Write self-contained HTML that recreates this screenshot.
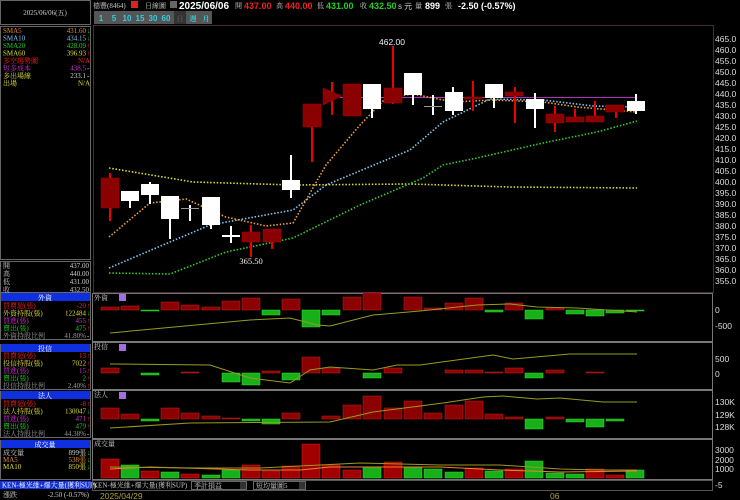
<!DOCTYPE html>
<html><head><meta charset="utf-8"><style>
html,body{margin:0;padding:0;background:#000;}
svg{display:block;font-family:"Liberation Sans","Noto Sans CJK TC",sans-serif;}
.s{font-family:"Liberation Serif","Noto Serif CJK SC",serif;font-size:7px;}
.a{font-size:8.5px;fill:#ddd;font-family:"Liberation Sans",sans-serif;}
</style></head><body>
<svg width="740" height="500" viewBox="0 0 740 500" xmlns="http://www.w3.org/2000/svg">
<rect width="740" height="500" fill="#000"/>
<rect x="0.5" y="0.5" width="90" height="24" fill="none" stroke="#666"/>
<text x="45" y="15" class="s" fill="#ccc" text-anchor="middle">2025/06/06(五)</text>
<rect x="0.5" y="26.5" width="90" height="233" fill="none" stroke="#666"/>
<g class="s">
<text x="3" y="33" fill="#e08a30">SMA5</text><text x="86" y="33" fill="#e08a30" text-anchor="end">431.60</text><text x="87" y="33" fill="#2c2">↓</text>
<text x="3" y="40.5" fill="#7cc8f0">SMA10</text><text x="86" y="40.5" fill="#7cc8f0" text-anchor="end">434.15</text><text x="87" y="40.5" fill="#2c2">↓</text>
<text x="3" y="48" fill="#2c2">SMA20</text><text x="86" y="48" fill="#2c2" text-anchor="end">428.09</text><text x="87" y="48" fill="#e22">↑</text>
<text x="3" y="55.5" fill="#dd3">SMA60</text><text x="86" y="55.5" fill="#dd3" text-anchor="end">396.93</text><text x="87" y="55.5" fill="#e22">↑</text>
<text x="3" y="63" fill="#e22">多空趨勢圖</text><text x="90" y="63" fill="#e22" text-anchor="end">N/A</text>
<text x="3" y="70.5" fill="#c3c">短多成本</text><text x="86" y="70.5" fill="#c3c" text-anchor="end">438.5</text><text x="87" y="70.5" fill="#ccc">-</text>
<text x="3" y="78" fill="#dd3">多出場線</text><text x="86" y="78" fill="#ccc" text-anchor="end">233.1</text><text x="87" y="78" fill="#ccc">-</text>
<text x="3" y="85.5" fill="#dd3">出場</text><text x="90" y="85.5" fill="#dd3" text-anchor="end">N/A</text>
</g>
<rect x="0.5" y="261.5" width="90" height="31" fill="none" stroke="#666"/>
<g class="s" fill="#ccc">
<text x="3" y="268">開</text><text x="89" y="268" text-anchor="end">437.00</text>
<text x="3" y="276">高</text><text x="89" y="276" text-anchor="end">440.00</text>
<text x="3" y="284">低</text><text x="89" y="284" text-anchor="end">431.00</text>
<text x="3" y="292">收</text><text x="89" y="292" text-anchor="end">432.50</text>
</g>
<rect x="0.5" y="293.5" width="90" height="46" fill="none" stroke="#666"/>
<rect x="1" y="293" width="89" height="8" fill="#1030e0"/>
<text x="45" y="300" class="s" fill="#fff" text-anchor="middle">外資</text>
<g class="s">
<text x="3" y="308" fill="#e22">買賣超(張)</text><text x="86" y="308" fill="#e22" text-anchor="end">-20</text><text x="87" y="308" fill="#e22">↑</text>
<text x="3" y="315.5" fill="#dd3">外資持股(張)</text><text x="86" y="315.5" fill="#dd3" text-anchor="end">122484</text><text x="87" y="315.5" fill="#2c2">↓</text>
<text x="3" y="323" fill="#c3c">買進(張)</text><text x="86" y="323" fill="#c3c" text-anchor="end">455</text><text x="87" y="323" fill="#e22">↑</text>
<text x="3" y="330.5" fill="#2c2">賣出(張)</text><text x="86" y="330.5" fill="#2c2" text-anchor="end">475</text><text x="87" y="330.5" fill="#e22">↑</text>
<text x="3" y="338" fill="#999">外資持股比例</text><text x="86" y="338" fill="#999" text-anchor="end">41.80%</text><text x="87" y="338" fill="#ccc">-</text>
</g>
<rect x="0.5" y="344.5" width="90" height="45" fill="none" stroke="#666"/>
<rect x="1" y="344" width="89" height="8" fill="#1030e0"/>
<text x="45" y="351" class="s" fill="#fff" text-anchor="middle">投信</text>
<g class="s">
<text x="3" y="358" fill="#e22">買賣超(張)</text><text x="86" y="358" fill="#e22" text-anchor="end">13</text><text x="87" y="358" fill="#e22">↑</text>
<text x="3" y="365.5" fill="#dd3">投信持股(張)</text><text x="86" y="365.5" fill="#dd3" text-anchor="end">7022</text><text x="87" y="365.5" fill="#e22">↑</text>
<text x="3" y="373" fill="#c3c">買進(張)</text><text x="86" y="373" fill="#c3c" text-anchor="end">15</text><text x="87" y="373" fill="#e22">↑</text>
<text x="3" y="380.5" fill="#2c2">賣出(張)</text><text x="86" y="380.5" fill="#2c2" text-anchor="end">2</text><text x="87" y="380.5" fill="#e22">↑</text>
<text x="3" y="388" fill="#999">投信持股比例</text><text x="86" y="388" fill="#999" text-anchor="end">2.40%</text><text x="87" y="388" fill="#e22">↑</text>
</g>
<rect x="0.5" y="391.5" width="90" height="46" fill="none" stroke="#666"/>
<rect x="1" y="391" width="89" height="8" fill="#1030e0"/>
<text x="45" y="398" class="s" fill="#fff" text-anchor="middle">法人</text>
<g class="s">
<text x="3" y="406" fill="#e22">買賣超(張)</text><text x="86" y="406" fill="#e22" text-anchor="end">-8</text><text x="87" y="406" fill="#e22">↑</text>
<text x="3" y="413.5" fill="#dd3">法人持股(張)</text><text x="86" y="413.5" fill="#dd3" text-anchor="end">130047</text><text x="87" y="413.5" fill="#2c2">↓</text>
<text x="3" y="421" fill="#c3c">買進(張)</text><text x="86" y="421" fill="#c3c" text-anchor="end">471</text><text x="87" y="421" fill="#e22">↑</text>
<text x="3" y="428.5" fill="#2c2">賣出(張)</text><text x="86" y="428.5" fill="#2c2" text-anchor="end">479</text><text x="87" y="428.5" fill="#e22">↑</text>
<text x="3" y="436" fill="#999">法人持股比例</text><text x="86" y="436" fill="#999" text-anchor="end">44.38%</text><text x="87" y="436" fill="#ccc">-</text>
</g>
<rect x="0.5" y="440.5" width="90" height="39" fill="none" stroke="#666"/>
<rect x="1" y="440" width="89" height="8" fill="#1030e0"/>
<text x="45" y="447" class="s" fill="#fff" text-anchor="middle">成交量</text>
<g class="s">
<text x="3" y="455" fill="#ccc">成交量</text><text x="86" y="455" fill="#ccc" text-anchor="end">899張</text><text x="87" y="455" fill="#2c2">↓</text>
<text x="3" y="462" fill="#e08a30">MA5</text><text x="86" y="462" fill="#e08a30" text-anchor="end">538張</text><text x="87" y="462" fill="#2c2">↓</text>
<text x="3" y="469" fill="#dd3">MA10</text><text x="86" y="469" fill="#dd3" text-anchor="end">850張</text><text x="87" y="469" fill="#2c2">↓</text>
</g>
<rect x="0" y="481" width="91" height="8" fill="#1030e0"/>
<text x="2" y="487.5" class="s" fill="#fff" font-size="6.5">KEN-極光維+爆大量(獲利SUP)</text>
<text x="3" y="497" class="s" fill="#ccc">漲跌</text><text x="89" y="497" class="s" fill="#ccc" text-anchor="end">-2.50 (-0.57%)</text>

<g font-size="8.5">
<text x="93" y="8" class="s" fill="#ccc">德豐(8464)</text>
<rect x="131" y="1" width="7" height="7" fill="#d22"/>
<text x="145" y="8" class="s" fill="#ccc">日線圖</text>
<rect x="170" y="1" width="7" height="7" fill="#666"/>
<text x="179" y="9" fill="#fff" font-weight="bold" font-size="10">2025/06/06</text>
<text x="235" y="8" class="s" fill="#ccc">開</text><text x="244" y="9" fill="#e22" font-weight="bold" font-size="9">437.00</text>
<text x="276" y="8" class="s" fill="#ccc">高</text><text x="285" y="9" fill="#e22" font-weight="bold" font-size="9">440.00</text>
<text x="317" y="8" class="s" fill="#ccc">低</text><text x="326" y="9" fill="#2c2" font-weight="bold" font-size="9">431.00</text>
<text x="360" y="8" class="s" fill="#ccc">收</text><text x="369" y="9" fill="#2c2" font-weight="bold" font-size="9">432.50</text>
<text x="398" y="9" fill="#ccc" font-size="8">s 元</text>
<text x="415" y="8" class="s" fill="#ccc">量</text><text x="425" y="9" fill="#fff" font-weight="bold" font-size="9">899</text>
<text x="445" y="8" class="s" fill="#ccc">張</text>
<text x="458" y="9" fill="#fff" font-weight="bold" font-size="9">-2.50 (-0.57%)</text>
</g>
<g font-size="8" fill="#3cd" text-anchor="middle" font-weight="bold">
<rect x="94" y="11" width="118" height="13" fill="#555"/>
<rect x="174" y="11" width="12" height="13" fill="#333"/>
<text x="101" y="21">1</text><text x="114" y="21">5</text><text x="127" y="21">10</text><text x="140" y="21">15</text><text x="153" y="21">30</text><text x="166" y="21">60</text>
<text x="180" y="21" fill="#555" class="s">日</text><text x="193" y="21" class="s">週</text><text x="206" y="21" class="s">月</text>
</g>

<rect x="93.5" y="25.5" width="620" height="267" fill="none" stroke="#4a2a38"/>
<g class="a">
<text x="715" y="42">465.0</text><text x="715" y="53">460.0</text><text x="715" y="64">455.0</text><text x="715" y="75">450.0</text><text x="715" y="86">445.0</text><text x="715" y="97">440.0</text><text x="715" y="108">435.0</text><text x="715" y="119">430.0</text><text x="715" y="130">425.0</text><text x="715" y="141">420.0</text><text x="715" y="152">415.0</text><text x="715" y="163">410.0</text><text x="715" y="174">405.0</text><text x="715" y="185">400.0</text><text x="715" y="196">395.0</text><text x="715" y="207">390.0</text><text x="715" y="218">385.0</text><text x="715" y="229">380.0</text><text x="715" y="240">375.0</text><text x="715" y="251">370.0</text><text x="715" y="262">365.0</text><text x="715" y="273">360.0</text><text x="715" y="284">355.0</text>
</g>
<line x1="340" y1="97.5" x2="637" y2="97.5" stroke="#b030c0" stroke-width="1"/>
<g fill="none" stroke-width="1.6" stroke-dasharray="1.5 1.8">
<polyline stroke="#dddd30" points="109,168 193,182 293,185 410,184 510,187 637,188"/>
<polyline stroke="#3c3" points="109,273 170,274 226,252 293,238 360,205 423,178 443,165 477,158 543,143 597,132 637,121"/>
<polyline stroke="#7cc8f0" points="109,268 170,242 210,225 293,210 326,185 410,150 443,122 490,99 543,100 593,106 637,107"/>
<polyline stroke="#f0a040" points="109,237 150,203 186,199 226,217 266,226 293,223 326,165 360,125 386,98 413,94 453,102 493,100 543,102 577,107 637,112"/>
</g>
<g>
<g stroke="#e00" stroke-width="2">
<line x1="110" y1="173" x2="110" y2="221"/>
<line x1="251" y1="225" x2="251" y2="257"/>
<line x1="272" y1="229" x2="272" y2="249"/>
<line x1="312" y1="104" x2="312" y2="162"/>
<line x1="332" y1="82" x2="332" y2="115"/>
<line x1="393" y1="46" x2="393" y2="104"/>
<line x1="473" y1="81" x2="473" y2="111"/>
<line x1="515" y1="87" x2="515" y2="123"/>
<line x1="555" y1="106" x2="555" y2="132"/>
<line x1="575" y1="109" x2="575" y2="122"/>
<line x1="595" y1="101" x2="595" y2="122"/>
<line x1="616" y1="112" x2="616" y2="118"/>
</g>
<g stroke="#fff" stroke-width="2">
<line x1="130" y1="191" x2="130" y2="208"/>
<line x1="150" y1="182" x2="150" y2="204"/>
<line x1="170" y1="196" x2="170" y2="239"/>
<line x1="190" y1="205" x2="190" y2="221"/>
<line x1="211" y1="197" x2="211" y2="229"/>
<line x1="231" y1="226" x2="231" y2="243"/>
<line x1="291" y1="155" x2="291" y2="198"/>
<line x1="372" y1="84" x2="372" y2="118"/>
<line x1="413" y1="73" x2="413" y2="105"/>
<line x1="433" y1="95" x2="433" y2="115"/>
<line x1="453" y1="87" x2="453" y2="115"/>
<line x1="494" y1="84" x2="494" y2="108"/>
<line x1="535" y1="93" x2="535" y2="128"/>
<line x1="636" y1="94" x2="636" y2="114"/>
</g>
<g fill="#8b0000" stroke="#a00" stroke-width="0.5">
<rect x="101" y="178" width="18" height="30"/>
<rect x="242" y="232" width="18" height="10"/>
<rect x="263" y="229" width="18" height="13"/>
<rect x="303" y="104" width="18" height="23"/>
<polygon points="323,88 342,96 323,105"/>
<rect x="343" y="84" width="18" height="32"/>
<rect x="384" y="88" width="18" height="15"/>
<rect x="464" y="97" width="18" height="2"/>
<rect x="505" y="92" width="18" height="4"/>
<rect x="546" y="114" width="18" height="9"/>
<rect x="566" y="117" width="18" height="5"/>
<rect x="586" y="116" width="18" height="6"/>
<rect x="606" y="105" width="18" height="7"/>
</g>
<g fill="#fff">
<rect x="121" y="191" width="18" height="10"/>
<rect x="141" y="184" width="18" height="11"/>
<rect x="161" y="196" width="18" height="23"/>
<rect x="181" y="208" width="18" height="1" fill="#999"/>
<rect x="202" y="197" width="18" height="28"/>
<rect x="222" y="235" width="18" height="2"/>
<rect x="282" y="180" width="18" height="10"/>
<rect x="363" y="84" width="18" height="25"/>
<rect x="404" y="73" width="18" height="22"/>
<rect x="424" y="106" width="18" height="1" fill="#999"/>
<rect x="445" y="92" width="18" height="19"/>
<rect x="485" y="84" width="18" height="14"/>
<rect x="526" y="99" width="18" height="10"/>
<rect x="627" y="101" width="18" height="10"/>
</g>
</g>
<text x="392" y="45" font-size="8.5" fill="#eee" text-anchor="middle">462.00</text>
<text x="251" y="264" font-size="8.5" fill="#eee" text-anchor="middle" font-family="Liberation Serif,serif">365.50</text>

<g fill="none" stroke="#777">
<rect x="92.5" y="293.5" width="620" height="48"/>
<rect x="92.5" y="342.5" width="620" height="47"/>
<rect x="92.5" y="390.5" width="620" height="48"/>
<rect x="92.5" y="439.5" width="620" height="40"/>
<rect x="92.5" y="480.5" width="620" height="10" stroke="#555"/>
</g>
<g class="s" fill="#ccc">
<text x="94" y="300">外資</text><text x="94" y="349">投信</text><text x="94" y="397">法人</text><text x="94" y="446">成交量</text>
</g>
<g fill="#a070e0"><rect x="119" y="294" width="7" height="7"/><rect x="119" y="344" width="7" height="7"/><rect x="119" y="392" width="7" height="7"/></g>
<g class="a">
<text x="715" y="313">0</text><text x="715" y="329">-500</text>
<text x="715" y="362">500</text><text x="715" y="377">0</text>
<text x="715" y="405">130K</text><text x="715" y="418">129K</text><text x="715" y="430">128K</text>
<text x="715" y="453">3000</text><text x="715" y="463">2000</text><text x="715" y="472">1000</text>
<text x="715" y="488">-5</text>
</g>
<g fill="#8b0000" stroke="#c22" stroke-width="0.5">
<rect x="101" y="307" width="18" height="3"/><rect x="121" y="306" width="18" height="4"/><rect x="161" y="302" width="18" height="8"/><rect x="181" y="305" width="18" height="5"/><rect x="202" y="307" width="18" height="3"/><rect x="222" y="301" width="18" height="9"/><rect x="242" y="298" width="18" height="12"/><rect x="282" y="299" width="18" height="11"/><rect x="343" y="297" width="18" height="13"/><rect x="363" y="293" width="18" height="17"/><rect x="404" y="297" width="18" height="13"/><rect x="424" y="308" width="18" height="2"/><rect x="445" y="303" width="18" height="7"/><rect x="465" y="298" width="18" height="12"/><rect x="505" y="303" width="18" height="7"/><rect x="546" y="308" width="18" height="2"/>
</g>
<g fill="#18b018" stroke="#3d3" stroke-width="0.5">
<rect x="141" y="310" width="18" height="1"/><rect x="262" y="310" width="18" height="5"/><rect x="302" y="310" width="18" height="17"/><rect x="322" y="310" width="18" height="5"/><rect x="485" y="310" width="18" height="2"/><rect x="525" y="310" width="18" height="9"/><rect x="566" y="310" width="18" height="4"/><rect x="586" y="310" width="18" height="6"/><rect x="606" y="310" width="18" height="3"/><rect x="626" y="310" width="18" height="1"/>
</g>
<polyline fill="none" stroke="#9a9a20" stroke-width="1" points="110,333 250,320 290,318 317,325 330,326 373,315 420,311 477,305 510,304 537,307 577,308 637,312"/>
<g fill="#8b0000" stroke="#c22" stroke-width="0.5">
<rect x="101" y="368" width="18" height="5"/><rect x="181" y="372" width="18" height="1"/><rect x="262" y="371" width="18" height="2"/><rect x="302" y="357" width="18" height="16"/><rect x="322" y="368" width="18" height="5"/><rect x="384" y="368" width="18" height="5"/><rect x="445" y="370" width="18" height="3"/><rect x="465" y="370" width="18" height="3"/><rect x="485" y="372" width="18" height="1"/><rect x="505" y="368" width="18" height="5"/><rect x="546" y="370" width="18" height="3"/><rect x="586" y="372" width="18" height="1"/>
</g>
<g fill="#18b018" stroke="#3d3" stroke-width="0.5">
<rect x="141" y="373" width="18" height="2"/><rect x="222" y="373" width="18" height="9"/><rect x="242" y="373" width="18" height="12"/><rect x="282" y="373" width="18" height="7"/><rect x="363" y="373" width="18" height="5"/><rect x="525" y="373" width="18" height="5"/>
</g>
<polyline fill="none" stroke="#9a9a20" stroke-width="1" points="110,364 210,365 250,378 290,383 310,370 330,367 373,370 397,365 420,365 493,355 513,359 570,354 637,354"/>
<g fill="#8b0000" stroke="#c22" stroke-width="0.5">
<rect x="101" y="408" width="18" height="11"/><rect x="121" y="414" width="18" height="5"/><rect x="161" y="408" width="18" height="11"/><rect x="181" y="413" width="18" height="6"/><rect x="202" y="416" width="18" height="3"/><rect x="222" y="418" width="18" height="1"/><rect x="282" y="413" width="18" height="6"/><rect x="322" y="416" width="18" height="3"/><rect x="343" y="405" width="18" height="14"/><rect x="363" y="396" width="18" height="23"/><rect x="384" y="408" width="18" height="11"/><rect x="404" y="401" width="18" height="18"/><rect x="424" y="413" width="18" height="6"/><rect x="445" y="405" width="18" height="14"/><rect x="465" y="401" width="18" height="18"/><rect x="485" y="414" width="18" height="5"/><rect x="505" y="417" width="18" height="2"/><rect x="546" y="417" width="18" height="2"/>
</g>
<g fill="#18b018" stroke="#3d3" stroke-width="0.5">
<rect x="141" y="419" width="18" height="2"/><rect x="242" y="419" width="18" height="2"/><rect x="262" y="419" width="18" height="5"/><rect x="525" y="419" width="18" height="10"/><rect x="566" y="419" width="18" height="3"/><rect x="586" y="419" width="18" height="8"/><rect x="606" y="419" width="18" height="2"/>
</g>
<polyline fill="none" stroke="#9a9a20" stroke-width="1" points="110,428 190,423 330,422 373,412 420,406 443,403 483,397 503,396 537,399 560,398 603,402 637,402"/>
<g fill="#a00000" stroke="#d22" stroke-width="0.5">
<rect x="101" y="459" width="18" height="19"/><rect x="141" y="471" width="18" height="7"/><rect x="181" y="474" width="18" height="4"/><rect x="242" y="465" width="18" height="13"/><rect x="262" y="471" width="18" height="7"/><rect x="282" y="466" width="18" height="12"/><rect x="302" y="444" width="18" height="34"/><rect x="322" y="465" width="18" height="13"/><rect x="343" y="470" width="18" height="8"/><rect x="384" y="462" width="18" height="16"/><rect x="465" y="468" width="18" height="10"/><rect x="505" y="469" width="18" height="9"/><rect x="586" y="469" width="18" height="9"/><rect x="606" y="475" width="18" height="3"/>
</g>
<g fill="#18b018" stroke="#3d3" stroke-width="0.5">
<rect x="121" y="465" width="18" height="13"/><rect x="161" y="472" width="18" height="6"/><rect x="202" y="475" width="18" height="3"/><rect x="222" y="470" width="18" height="8"/><rect x="363" y="467" width="18" height="11"/><rect x="404" y="467" width="18" height="11"/><rect x="424" y="469" width="18" height="9"/><rect x="445" y="472" width="18" height="6"/><rect x="485" y="471" width="18" height="7"/><rect x="525" y="461" width="18" height="17"/><rect x="546" y="473" width="18" height="5"/><rect x="566" y="474" width="18" height="4"/><rect x="626" y="470" width="18" height="8"/>
</g>
<polyline fill="none" stroke="#f08030" stroke-width="1" points="110,469 150,467 250,470 300,470 330,467 380,467 440,467 500,470 560,472 637,471"/>
<polyline fill="none" stroke="#9a9a20" stroke-width="1" points="110,467 200,468 260,468 320,465 360,463 440,465 500,465 560,469 600,470 637,470"/>
<text x="93" y="487.5" class="s" fill="#ccc" font-size="6.5">KEN-極光維+爆大量(獲利SUP)</text>
<rect x="191.5" y="481.5" width="55" height="8" fill="#000" stroke="#666"/><text x="194" y="488" class="s" fill="#ccc">季計損益</text><rect x="240" y="482" width="6" height="7" fill="#333"/>
<rect x="253.5" y="481.5" width="52" height="8" fill="#000" stroke="#666"/><text x="256" y="488" class="s" fill="#ccc">短均量圖5</text><rect x="299" y="482" width="6" height="7" fill="#333"/>
<text x="100" y="499" font-size="8.5" fill="#b0a030">2025/04/29</text>
<text x="550" y="499" font-size="8.5" fill="#b0a030">06</text>
</svg>
</body></html>
